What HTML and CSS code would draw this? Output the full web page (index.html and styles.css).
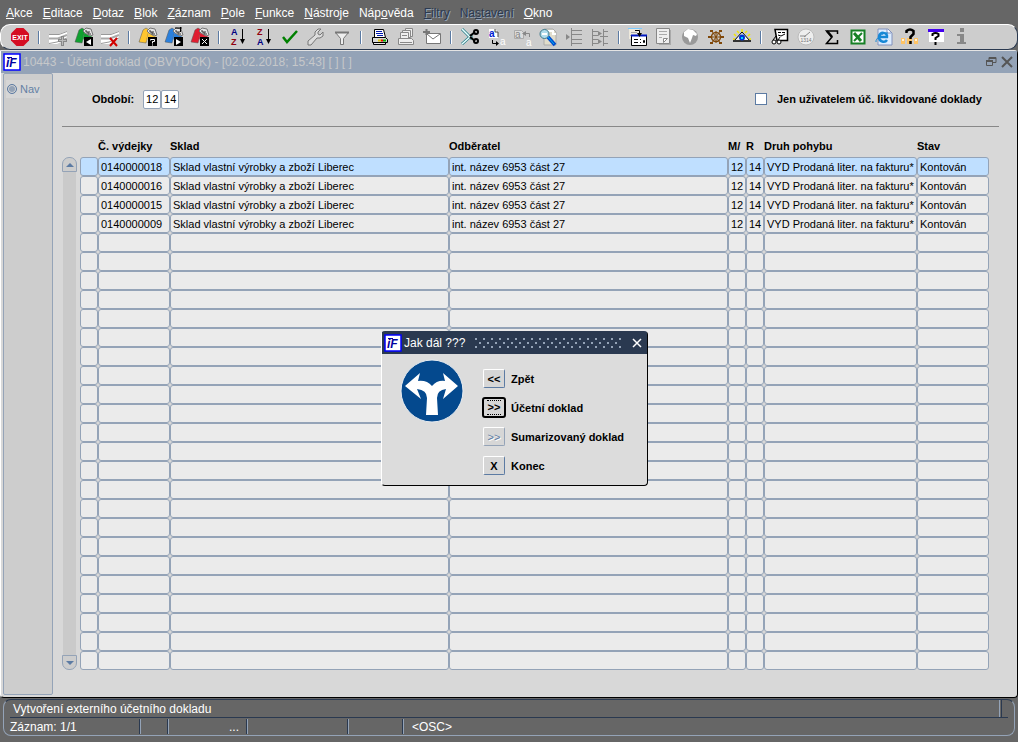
FILE: index.html
```html
<!DOCTYPE html>
<html lang="cs">
<head>
<meta charset="utf-8">
<title>10443 - Účetní doklad (OBVYDOK)</title>
<link rel="stylesheet" href="styles.css">
</head>
<body>
<svg class="defs" aria-hidden="true">
  <symbol id="folder" viewBox="0 0 22 22">
    <path d="M2 16 6 4 9 2 12 4 9 17z" fill="currentColor" stroke="#555" stroke-width=".5"/>
    <path d="M9 16 12 5 19 9 18 12H11z" fill="currentColor"/>
    <path d="M10 5 13 2 18 3 20 9 17 10 12 7z" fill="#e4e4e4" stroke="#777"/>
    <path d="M12 5h2v2h2V5M15 8h3" fill="none" stroke="#333"/>
    <path d="M11 11h9v9h-9z" fill="#000"/>
  </symbol>
  <symbol id="sheet" viewBox="0 0 22 22">
    <path d="M2 8 12 8 20 5V13L10 18 2 18z" fill="#fff"/>
    <path d="M2 8.500 12 8.500 20 5.500" fill="none" stroke="#999"/>
    <path d="M2 12.500 11 12.500 20 9" fill="none" stroke="#aaa" stroke-width="2"/>
    <path d="M2 17.500 10 16 20 12" fill="none" stroke="#999"/>
  </symbol>
  <symbol id="logo" viewBox="0 0 18 18">
    <path d="M1 1h16v16H1z" fill="#fff" stroke="#00f" stroke-width="1.500"/>
    <text x="3" y="14" font-size="12" font-weight="700" font-style="italic" fill="#0000a0">iF</text>
    <path d="M4 4.500h5" stroke="#0000a0"/>
  </symbol>
</svg>

<nav class="menu">
  <button><u>A</u>kce</button><button><u>E</u>ditace</button><button><u>D</u>otaz</button><button><u>B</u>lok</button><button><u>Z</u>áznam</button><button><u>P</u>ole</button><button><u>F</u>unkce</button><button><u>N</u>ástroje</button><button>Náp<u>o</u>věda</button><button disabled><u>F</u>iltry</button><button disabled>Na<u>s</u>tavení</button><button><u>O</u>kno</button>
</nav>

<div class="toolbar" role="toolbar">
  <button aria-label="Exit"><svg viewBox="0 0 22 22"><path d="M7.500 2h7L20 7.500v7L14.500 20h-7L2 14.500v-7z" fill="#d50d22"/><text x="11" y="13.500" font-size="7" font-weight="700" fill="#fff" text-anchor="middle">EXIT</text></svg></button>
  <i></i>
  <button aria-label="Nový záznam"><svg viewBox="0 0 22 22"><use href="#sheet"/><path d="M15.500 10v10M11 14.500h9" stroke="#888" stroke-width="3"/><path d="M15.500 11v8M12 14.500h7" stroke="#bbb"/></svg></button>
  <button aria-label="Uložit"><svg viewBox="0 0 22 22" color="#10a030"><use href="#folder"/><path d="M18 13v6l-5-3z" fill="#fff"/></svg></button>
  <button aria-label="Smazat záznam"><svg viewBox="0 0 22 22"><use href="#sheet"/><path d="m11 12 7 8M18 12l-7 8" stroke="#d00000" stroke-width="2"/></svg></button>
  <i></i>
  <button aria-label="Zadat dotaz"><svg viewBox="0 0 22 22" color="#ffc62e"><use href="#folder"/><path d="M13.500 14.500v-1h4v2h-2v2m0 1v1" fill="none" stroke="#fff"/></svg></button>
  <button aria-label="Provést dotaz"><svg viewBox="0 0 22 22" color="#2b80dc"><use href="#folder"/><path d="M13 13v6l5-3z" fill="#fff"/><path d="M12 2h7M17.500 1v5" stroke="#000"/></svg></button>
  <button aria-label="Zrušit dotaz"><svg viewBox="0 0 22 22" color="#e01d30"><use href="#folder"/><path d="m13 13 5 5m0-5-5 5" stroke="#fff"/></svg></button>
  <i></i>
  <button aria-label="Řadit vzestupně"><svg viewBox="0 0 22 22"><text x="4" y="9" font-size="9" font-weight="700" fill="#000080">A</text><text x="4" y="19" font-size="9" font-weight="700" fill="#900010">Z</text><path d="M15.500 3v13" stroke="#000" stroke-width="1"/><path d="M13 13h5l-2.500 5z"/></svg></button>
  <button aria-label="Řadit sestupně"><svg viewBox="0 0 22 22"><text x="4" y="9" font-size="9" font-weight="700" fill="#900010">Z</text><text x="4" y="19" font-size="9" font-weight="700" fill="#000080">A</text><path d="M15.500 3v13" stroke="#000" stroke-width="1"/><path d="M13 13h5l-2.500 5z"/></svg></button>
  <button aria-label="Potvrdit"><svg viewBox="0 0 22 22"><path d="M4 11 8 16 18 5" fill="none" stroke="#008000" stroke-width="2.500"/></svg></button>
  <button aria-label="Nastavení"><svg viewBox="0 0 22 22"><path d="M3 18v-3l7-6V6l3-3h3l-3 3v2l2 1 3-3v4l-3 2h-3l-6 7H3z" fill="#ddd" stroke="#777"/></svg></button>
  <button aria-label="Filtr"><svg viewBox="0 0 22 22"><path d="M4.500 6.500h13l-5 6v6h-3v-6z" fill="#eee" stroke="#777"/><path d="M4 6.500h14" stroke="#777" stroke-width="2"/></svg></button>
  <i></i>
  <button aria-label="Tisk"><svg viewBox="0 0 22 22"><path d="M5.500 3.500h9l2 8h-11z" fill="#fff" stroke="#000"/><path d="M7 5.500h6M7 7.500h7M8 9.500h6" stroke="#0018b0"/><path d="M3.500 11.500h13l2 2v3h-15z" fill="#d8d8d8" stroke="#000"/><path d="M4.500 17v1.500h12V17" fill="#eee" stroke="#000"/><path d="M9 14.500h3" stroke="#e5c900" stroke-width="2"/><path d="M12 14.500h2" stroke="#e00" stroke-width="2"/><path d="M14 14.500h3" stroke="#0a0" stroke-width="2"/></svg></button>
  <button aria-label="Tisk sestav"><svg viewBox="0 0 22 22"><g fill="#eee" stroke="#888"><path d="M10.500 2.500h7v8h-7z"/><path d="M7.500 4.500h8v7h-8z"/><path d="M5.500 6.500h8v6h-8z"/><path d="M3.500 12.500h13l2 2v4h-15z"/></g><path d="M7 9.500h5M5 16.500h12" stroke="#888"/></svg></button>
  <button aria-label="Odeslat poštou"><svg viewBox="0 0 22 22"><path d="M5.500 7.500h14v10h-14z" fill="#fff" stroke="#777"/><path d="m6 8 6 5 7-5" fill="none" stroke="#777"/><path d="M2 6h7M5.500 3v6" stroke="#777" stroke-width="2"/></svg></button>
  <i></i>
  <button aria-label="Vyjmout"><svg viewBox="0 0 22 22"><path d="M3 3 13 13M3 18 13 9" stroke="#287b86" stroke-width="3"/><path d="M3 3 12 12M3 18 12 10" stroke="#e8ffff" stroke-width="1.500"/><path d="m11 10 5-4M11 11l5 4" stroke="#000" stroke-width="2"/><g fill="none" stroke="#000" stroke-width="2"><circle cx="17" cy="6" r="2"/><circle cx="17" cy="15" r="2"/></g></svg></button>
  <button aria-label="Kopírovat"><svg viewBox="0 0 22 22"><path d="M4 3h6l3 3v6H4z" fill="#fff"/><path d="M10 3v3h3v5" fill="none" stroke="#444"/><text x="4" y="11" font-size="10" font-weight="700" fill="#0020d0">a</text><text x="15" y="19" font-size="10" fill="#fff">a</text><path d="M7.500 14v3.500h5" fill="none" stroke="#000"/><path d="M11 15v5l3-2.500z"/></svg></button>
  <button aria-label="Vložit"><svg viewBox="0 0 22 22"><path d="M3.500 4.500h7l2 2v6h-9z" fill="#ddd" stroke="#aaa"/><text x="4" y="12" font-size="10" fill="#888">a</text><text x="15" y="20" font-size="10" fill="#fff">a</text><path d="M18.500 11V7.500H14" fill="none" stroke="#888"/><path d="M15 5v5l-4-2.500z" fill="#888"/></svg></button>
  <button aria-label="Hledat"><svg viewBox="0 0 22 22"><path d="M7 3h9l3 3v13H7z" fill="#e0dccb" stroke="#aaa"/><path d="M9 5h7v3h3" fill="none" stroke="#fff" stroke-width="2"/><circle cx="7.500" cy="8" r="4.500" fill="#b0ddec" stroke="#3f798b"/><path d="M5 8h5" stroke="#fff" stroke-width="2"/><path d="m11 11 7 8" stroke="#004bd0" stroke-width="3.500"/><path d="m11 11 6 7" stroke="#00b5f0"/></svg></button>
  <button aria-label="Vložit řádek"><svg viewBox="0 0 22 22"><path d="M8.500 2v18M8 4.500h11M8 8.500h11M8 13.500h11M8 17.500h11" stroke="#888"/><path d="M3 8v6l4-3z" fill="#888"/></svg></button>
  <button aria-label="Odstranit řádek"><svg viewBox="0 0 22 22"><path d="M3.500 3v17M14.500 3v17M4 5.500h5M4 9.500h5M4 13.500h5M4 17.500h5M14 5.500h5M11 10.500h8M14 17.500h5" stroke="#888"/><path d="M9 5v5l4-2.500zM9 13v5l4-2.500z" fill="#888"/></svg></button>
  <i></i>
  <button aria-label="Seznam hodnot"><svg viewBox="0 0 22 22"><path d="M2 3h10v10H2z" fill="#eee9dc"/><path d="M1 2.500h14" stroke="#7ccaff"/><path d="M4 6.500h6M3 9.500h4" stroke="#aaa"/><path d="M4.500 9.500h15v10h-15z" fill="#fff" stroke="#000"/><path d="M4 9.500h16" stroke="#0018c0" stroke-width="2"/><path d="M7 13.500h4M7 16.500h4M13 13.500h1M13 16.500h1M16.500 14.500h1v2h-1z" fill="none" stroke="#000"/><path d="M8 4.500h4.500V8" fill="none" stroke="#000"/><path d="M10 7h5l-2.500 4z"/></svg></button>
  <button aria-label="Poznámka"><svg viewBox="0 0 22 22"><path d="M6 4h12v15H6z" fill="#aaa"/><path d="M3.500 2.500h13v15h-13z" fill="#eee" stroke="#888"/><path d="M6 5.500h8M6 8.500h8M6 11.500h3" stroke="#aaa"/><path d="M10.500 16.500v-4h4z" fill="#fff" stroke="#888"/></svg></button>
  <button aria-label="Internet"><svg viewBox="0 0 22 22"><circle cx="11" cy="11" r="8" fill="#999"/><path d="m5 6 4-3 5 1 4 4-1 2-3-1-1 3-2 5-2-5-4-2z" fill="#fff"/></svg></button>
  <button aria-label="Kormidlo"><svg viewBox="0 0 22 22"><g fill="none" stroke="#80480a"><circle cx="11" cy="11" r="4.500" stroke-width="1.500"/><path d="M11 5v12M3 11h16M6 4l10 14M16 4 6 18"/></g><path d="M3 10h3v2H3zM16 10h3v2h-3zM5 4h3v2H5zM14 4h3v2h-3zM5 16h3v2H5zM14 16h3v2h-3z" fill="#80480a"/></svg></button>
  <button aria-label="Zobrazit"><svg viewBox="0 0 22 22"><path d="M11 3v3M6 5l2 2M16 5l-2 2M3 8l2 2M19 8l-2 2M2 13l2 0M20 13h-2" stroke="#f2e600" stroke-width="1.500"/><path d="M3 15 11 6 19 15z" fill="#eee" stroke="#000"/><path d="M2 15h18" stroke="#333" stroke-width="2"/><circle cx="11" cy="11.500" r="3" fill="#0035d5"/><path d="M10 11h2v2h-2z" fill="#00d8ff"/></svg></button>
  <i></i>
  <button aria-label="Náhled"><svg viewBox="0 0 22 22"><path d="M6 3.500h12.500v11H8z" fill="#fff" stroke="#000" stroke-width="1.500"/><path d="M9 6.500h3M13 6.500h3M9 9l3 1 4-2" fill="none" stroke="#000"/><circle cx="5" cy="16" r="2" fill="#fff" stroke="#000"/><circle cx="10" cy="16" r="2" fill="#fff" stroke="#000"/><path d="m4 14 3-4M9 14l2-3" stroke="#000"/></svg></button>
  <button aria-label="Hodiny"><svg viewBox="0 0 22 22"><circle cx="11" cy="11" r="8" fill="#eee" stroke="#bbb"/><path d="m9 11 6-5M5 10h6" stroke="#888"/><text x="11" y="16" font-size="5" fill="#777" text-anchor="middle">1314</text></svg></button>
  <button aria-label="Součet"><svg viewBox="0 0 22 22"><path d="M16.500 8V5H5.500l5.500 6-5.500 6.500h11V14" fill="none" stroke="#000" stroke-width="1.500"/><path d="m6 5 5 6" stroke="#000" stroke-width="2.500"/></svg></button>
  <button aria-label="Excel"><svg viewBox="0 0 22 22"><path d="M4.500 4.500h13v13h-13z" fill="#fff" stroke="#168026" stroke-width="2"/><path d="m7 7 7 8" stroke="#168026" stroke-width="3"/><path d="m15 7-8 8" stroke="#168026" stroke-width="2"/></svg></button>
  <button aria-label="Prohlížeč"><svg viewBox="0 0 22 22"><path d="M5 3h10l4 4v12H5z" fill="#dcecff" stroke="#8292bd"/><path d="M14 3v4h4" fill="#fff" stroke="#8292bd"/><path d="M14 14c-2 3-8 2-8-3 0-6 9-5 8 0H6" fill="none" stroke="#1788d5" stroke-width="2.500"/><path d="M3 16c-1-3 7-10 12-9" fill="none" stroke="#1788d5"/></svg></button>
  <button aria-label="Nápověda"><svg viewBox="0 0 22 22"><path d="M2 12h4v6H2zM8 12h5v6H8zM15 12h4v6h-4z" fill="#ffc465"/><path d="M3 13h2v2H3zM16 13h2v2h-2z" fill="#fff1d8"/><path d="M7.500 7V5q3.500-3 7 0v3l-3 3v2m0 2v3" fill="none" stroke="#000" stroke-width="2.500"/></svg></button>
  <button aria-label="Nápověda k oknu"><svg viewBox="0 0 22 22"><path d="M4 4h15v12H4z" fill="#fff"/><path d="M3 4.500h16" stroke="#4300ef" stroke-width="3"/><path d="M7.500 10V8q3-2 6 0v2l-3 2v2m0 2v3" fill="none" stroke="#000" stroke-width="2"/></svg></button>
  <button aria-label="Informace"><svg viewBox="0 0 22 22"><path d="M9 2h4v4H9zM6 8h7v8h2v2H6v-2h3v-6H6z" fill="#888"/></svg></button>
</div>

<section class="window">
  <header class="title">
    <svg class="logo"><use href="#logo"/></svg>
    <h1>10443 - Účetní doklad (OBVYDOK) - [02.02.2018; 15:43] [ ] [ ]</h1>
    <button aria-label="Obnovit"><svg viewBox="0 0 12 12"><path d="M4 4V1.500h7v5H8M1.500 4.500h6v5h-6z" fill="none" stroke="#555"/><path d="M4 2h7M1 5h7" stroke="#555" stroke-width="2"/></svg></button>
    <button aria-label="Zavřít"><svg viewBox="0 0 12 12"><path d="m1 1 10 10M11 1 1 11" stroke="#555" stroke-width="2"/></svg></button>
  </header>
  <div class="content">
    <aside class="side"><button class="nav"><span class="dot"></span>Nav</button></aside>
    <main class="main">
      <form class="filter">
        <label class="period" for="month">Období:</label>
        <input class="num" id="month" value="12"><input class="num" aria-label="Rok" value="14">
        <input class="check" type="checkbox" id="only"><label class="only" for="only">Jen uživatelem úč. likvidované doklady</label>
      </form>
      <div class="list">
        <div class="scroll">
          <button class="up" aria-label="Nahoru"></button>
          <div class="track"></div>
          <button class="down" aria-label="Dolů"></button>
        </div>
        <table class="grid">
          <colgroup><col class="c18"><col class="c72"><col><col><col class="c18"><col class="c18"><col class="c153"><col class="c72"></colgroup>
          <thead><tr><th></th><th>Č. výdejky</th><th>Sklad</th><th>Odběratel</th><th>M/</th><th>R</th><th>Druh pohybu</th><th>Stav</th></tr></thead>
          <tbody>
            <tr class="current"><td></td><td>0140000018</td><td>Sklad vlastní výrobky a zboží Liberec</td><td>int. název 6953 část 27</td><td class="r">12</td><td class="r">14</td><td>VYD Prodaná liter. na fakturu*</td><td>Kontován</td></tr>
            <tr><td></td><td>0140000016</td><td>Sklad vlastní výrobky a zboží Liberec</td><td>int. název 6953 část 27</td><td class="r">12</td><td class="r">14</td><td>VYD Prodaná liter. na fakturu*</td><td>Kontován</td></tr>
            <tr><td></td><td>0140000015</td><td>Sklad vlastní výrobky a zboží Liberec</td><td>int. název 6953 část 27</td><td class="r">12</td><td class="r">14</td><td>VYD Prodaná liter. na fakturu*</td><td>Kontován</td></tr>
            <tr><td></td><td>0140000009</td><td>Sklad vlastní výrobky a zboží Liberec</td><td>int. název 6953 část 27</td><td class="r">12</td><td class="r">14</td><td>VYD Prodaná liter. na fakturu*</td><td>Kontován</td></tr>
            <tr><td><td><td><td><td><td><td><td></tr>
            <tr><td><td><td><td><td><td><td><td></tr>
            <tr><td><td><td><td><td><td><td><td></tr>
            <tr><td><td><td><td><td><td><td><td></tr>
            <tr><td><td><td><td><td><td><td><td></tr>
            <tr><td><td><td><td><td><td><td><td></tr>
            <tr><td><td><td><td><td><td><td><td></tr>
            <tr><td><td><td><td><td><td><td><td></tr>
            <tr><td><td><td><td><td><td><td><td></tr>
            <tr><td><td><td><td><td><td><td><td></tr>
            <tr><td><td><td><td><td><td><td><td></tr>
            <tr><td><td><td><td><td><td><td><td></tr>
            <tr><td><td><td><td><td><td><td><td></tr>
            <tr><td><td><td><td><td><td><td><td></tr>
            <tr><td><td><td><td><td><td><td><td></tr>
            <tr><td><td><td><td><td><td><td><td></tr>
            <tr><td><td><td><td><td><td><td><td></tr>
            <tr><td><td><td><td><td><td><td><td></tr>
            <tr><td><td><td><td><td><td><td><td></tr>
            <tr><td><td><td><td><td><td><td><td></tr>
            <tr><td><td><td><td><td><td><td><td></tr>
            <tr><td><td><td><td><td><td><td><td></tr>
            <tr><td><td><td><td><td><td><td><td></tr>
          </tbody>
        </table>
      </div>
    </main>
  </div>

  <div class="dialog" role="dialog" aria-labelledby="dlg">
    <header class="dialog-title">
      <svg class="logo"><use href="#logo"/></svg>
      <h2 id="dlg">Jak dál ???</h2>
      <span class="grip"></span>
      <button aria-label="Zavřít"><svg viewBox="0 0 12 12"><path d="m2 2 8 8M10 2l-8 8" stroke="#fff" stroke-width="1.500"/></svg></button>
    </header>
    <div class="dialog-body">
      <svg class="sign" viewBox="0 0 64 64"><circle cx="32" cy="32" r="31" fill="#04498e" stroke="#e8edf2"/><path d="M26 56 27 39Q27 31 17 30L21 40 5 27 20 14 18 22Q27 21 32 27 37 21 45 22L43 14 58 27 43 40 46 30Q37 31 37 39L38 56z" fill="#fff"/></svg>
      <div class="choices">
        <button id="b1">&lt;&lt;</button><label for="b1">Zpět</label>
        <button id="b2" class="focused"><span>&gt;&gt;</span></button><label for="b2">Účetní doklad</label>
        <button id="b3" disabled>&gt;&gt;</button><label for="b3">Sumarizovaný doklad</label>
        <button id="b4">X</button><label for="b4">Konec</label>
      </div>
    </div>
  </div>
</section>

<footer class="status">
  <div class="panel">
    <div class="message">Vytvoření externího účetního dokladu</div>
    <div class="cells"><span class="record">Záznam: 1/1</span><span class="small"></span><span class="more">...</span><span class="wide"></span><span class="mid"></span><span class="osc">&lt;OSC&gt;</span></div>
  </div>
</footer>
</body>
</html>
```

FILE: styles.css
```css
* { box-sizing: border-box; }
body {
  margin: 0;
  min-height: 100vh;
  display: flex;
  flex-direction: column;
  background: #666;
  color: #000;
  font: 11px/16px "Liberation Sans", Arial, sans-serif;
}
button, input {
  margin: 0;
  padding: 0;
  border: 0;
  background: none;
  color: inherit;
  font: inherit;
}
h1, h2 { margin: 0; font-size: 12px; font-weight: 400; white-space: nowrap; }
.defs { display: none; }
svg { display: block; }
.logo { width: 18px; height: 18px; flex: none; }

.menu {
  display: flex;
  gap: 10px;
  height: 24px;
  padding: 1px 6px 0;
  color: #fff;
  font-size: 12px;
}
.menu button { white-space: nowrap; }
.menu button:disabled { color: #2b3a50; text-shadow: 1px 1px #94a3b7; }

.toolbar {
  display: flex;
  height: 26px;
  padding: 0 6px;
  background: #cdcdcd;
  border: 1px solid #2a3950;
  border-top-color: #fff;
  border-left-color: #fff;
  border-radius: 10px;
}
.toolbar button { width: 26px; display: flex; justify-content: center; align-items: center; }
.toolbar svg { width: 22px; height: 22px; }
.toolbar i {
  width: 12px;
  height: 13px;
  margin-top: 6px;
  background: linear-gradient(90deg, #5c7ba3 1px, #fff 1px) 5px 0 / 2px 13px no-repeat;
}

.window {
  position: relative;
  flex: 1;
  display: flex;
  flex-direction: column;
  background: #d8d8d8;
  border: 1px solid #000;
  border-top-color: #e4e4e4;
  border-left-color: #fff;
  border-radius: 0 4px 4px 4px;
}
.title {
  display: flex;
  align-items: center;
  height: 22px;
  padding: 0 2px;
  background: #94a3b7;
  color: #c6c8ca;
}
.title h1 { flex: 1; padding-left: 2px; }
.title button { width: 16px; }
.title svg:not(.logo) { width: 12px; height: 12px; margin: auto; }

.content { flex: 1; display: flex; }
.side {
  width: 50px;
  margin: 0 0 2px 2px;
  padding: 6px 2px;
  background: #cdcdcd;
  border: 1px solid #94a3b7;
  border-radius: 2px;
}
.nav {
  display: flex;
  align-items: center;
  gap: 3px;
  height: 18px;
  width: 34px;
  padding-left: 1px;
  background: #d6d6d6;
  color: #6481a5;
}
.dot {
  width: 10px;
  height: 10px;
  border: 1px solid #5c7ba3;
  border-radius: 50%;
  background: #94a3b7;
  box-shadow: inset 0 0 0 1px #d6d6d6;
}
.main { flex: 1; padding: 0 18px 0 9px; }
.filter {
  display: flex;
  align-items: center;
  height: 54px;
  padding: 0 9px 1px 30px;
  border-bottom: 1px solid #888;
  font-weight: 700;
}
.period { margin-right: 9px; }
.num {
  width: 18px;
  height: 19px;
  border: 1px solid #94a3b7;
  border-radius: 2px;
  background: #fff;
  text-align: center;
  font-weight: 400;
}
.check {
  appearance: none;
  width: 12px;
  height: 12px;
  margin: 0 10px 0 auto;
  border: 1px solid #5c7ba3;
  background: #fff;
}
.only { min-width: 213px; }
.list { display: flex; gap: 3px; padding-right: 10px; }
.scroll { width: 15px; margin-top: 30px; display: flex; flex-direction: column; align-items: center; }
.scroll button {
  width: 15px;
  height: 15px;
  display: grid;
  place-items: center;
  border: 1px solid #94a3b7;
  background: #cdcdcd;
}
.scroll .up { border-radius: 7px 7px 0 0; }
.scroll .down { border-radius: 0 0 7px 7px; }
.up::after, .down::after { content: ""; border: 4px solid transparent; }
.up::after { border-top: 0; border-bottom-color: #5c7ba3; }
.down::after { border-bottom: 0; border-top-color: #5c7ba3; }
.track { flex: 1; width: 13px; background: #cacaca; }

.grid { flex: 1; width: 100%; table-layout: fixed; border-collapse: separate; border-spacing: 0; }
.c18 { width: 18px; }
.c72 { width: 72px; }
.c153 { width: 153px; }
.grid th { height: 30px; padding: 8px 0 0; text-align: left; white-space: nowrap; }
.grid td {
  height: 19px;
  padding: 0 2px;
  border: 1px solid #94a3b7;
  border-radius: 3px;
  background: #ebebeb;
  white-space: nowrap;
}
.grid .r { text-align: right; }
.grid .current td { background: #bfdfff; }

.dialog {
  position: absolute;
  left: 380px;
  top: 280px;
  width: 267px;
  background: #dcdcdc;
  border: 1px solid #000;
  border-top-color: #2a3950;
  border-left-color: #fff;
  border-radius: 4px;
}
.dialog-title {
  display: flex;
  align-items: center;
  height: 22px;
  padding: 0 4px 0 2px;
  background: #2a3950;
  color: #fff;
}
.dialog-title h2 { padding: 0 10px 0 2px; }
.dialog-title button svg { width: 12px; height: 12px; }
.grip {
  flex: 1;
  height: 11px;
  margin-right: 8px;
  background:
    radial-gradient(circle at 1px 1px, #94a3b7 1px, transparent 1px) 0 0 / 8px 8px,
    radial-gradient(circle at 1px 1px, #94a3b7 1px, transparent 1px) 4px 4px / 8px 8px;
}
.dialog-body { display: flex; gap: 18px; padding: 5px 18px; }
.sign { width: 64px; height: 64px; flex: none; }
.choices {
  display: grid;
  grid-template-columns: 24px auto;
  grid-auto-rows: 29px;
  column-gap: 5px;
  align-items: center;
  padding-top: 5px;
  font-weight: 700;
  white-space: nowrap;
}
.choices button {
  width: 22px;
  height: 19px;
  margin: auto;
  border: 1px solid #5c7ba3;
  border-top-color: #fff;
  border-left-color: #fff;
  border-radius: 2px;
  background: #d6d6d6;
}
.choices button:disabled { color: #5c7ba3; font-weight: 400; text-shadow: 1px 1px #fff; border-color: #fff #94a3b7 #94a3b7 #fff; }
.choices .focused { width: 24px; height: 21px; border: 2px solid #000; border-radius: 3px; }
.focused span { display: block; margin: 0 3px; line-height: 13px; border: dotted #000; border-width: 1px 0; }

.status { height: 44px; padding: 1px 3px 6px; color: #fff; font-size: 12px; }
.panel {
  height: 37px;
  padding: 0 6px;
  border: 1px solid #94a3b7;
  border-top-color: #2a3950;
  border-radius: 8px;
}
.message {
  height: 18px;
  padding-left: 3px;
  line-height: 18px;
  border-bottom: 1px solid #2a3950;
  background: linear-gradient(90deg, #94a3b7 1px, #666 1px 2px, #2a3950 2px) calc(100% - 6px) 0 / 3px 17px no-repeat;
}
.cells { display: flex; height: 18px; padding-top: 1px; line-height: 17px; }
.cells span { height: 15px; border-right: 1px solid #94a3b7; box-shadow: inset -1px 0 #2a3950; }
.cells .record { width: 131px; }
.cells .small { width: 28px; }
.cells .more { width: 79px; padding-right: 8px; text-align: right; }
.cells .wide { width: 101px; }
.cells .mid { width: 55px; }
.cells .osc { padding-left: 8px; border: 0; box-shadow: none; }
```
